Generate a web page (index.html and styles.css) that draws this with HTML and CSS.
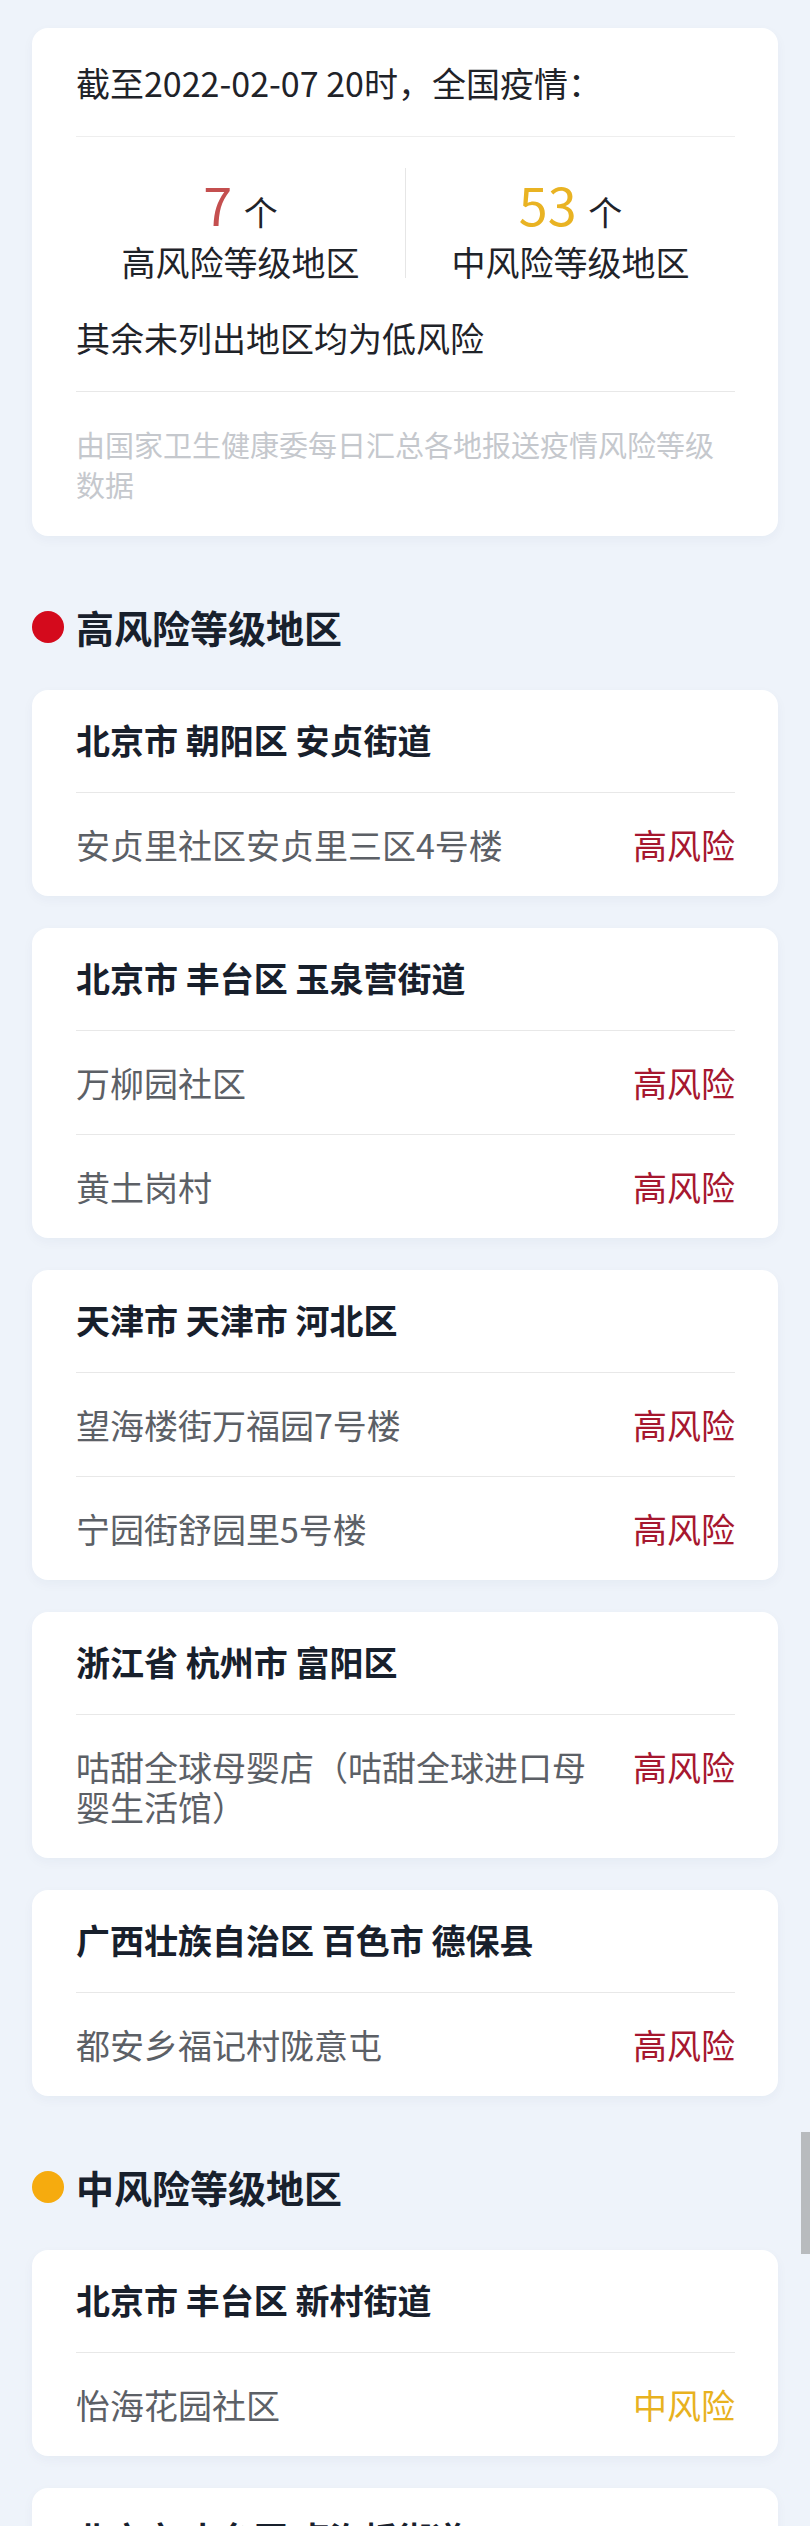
FILE: index.html
```html
<!DOCTYPE html>
<html lang="zh-CN">
<head>
  <meta charset="UTF-8">
  <title>全国疫情风险等级地区</title>
  <link rel="stylesheet" href="styles.css">
</head>
<body>

  <div class="page">
    <!-- 汇总 -->
    <div class="card summary">
      <div class="summary-head">截至2022-02-07 20时，全国疫情：</div>
      <div class="stats">
        <div class="stat">
          <div class="stat-num num-high">7 <span class="unit">个</span></div>
          <div class="stat-label">高风险等级地区</div>
        </div>
        <div class="stats-sep"></div>
        <div class="stat">
          <div class="stat-num num-mid">53 <span class="unit">个</span></div>
          <div class="stat-label">中风险等级地区</div>
        </div>
      </div>
      <p class="summary-note">其余未列出地区均为低风险</p>
      <p class="summary-source">由国家卫生健康委每日汇总各地报送疫情风险等级数据</p>
    </div>

    <!-- 高风险 -->
    <h2 class="section-title"><span class="dot dot-high"></span>高风险等级地区</h2>
    <div class="area-list">
      <div class="card area">
        <div class="area-title">北京市 朝阳区 安贞街道</div>
        <div class="area-row">
          <span class="area-name">安贞里社区安贞里三区4号楼</span>
          <span class="risk risk-high">高风险</span>
        </div>
      </div>

      <div class="card area">
        <div class="area-title">北京市 丰台区 玉泉营街道</div>
        <div class="area-row">
          <span class="area-name">万柳园社区</span>
          <span class="risk risk-high">高风险</span>
        </div>
        <div class="area-row">
          <span class="area-name">黄土岗村</span>
          <span class="risk risk-high">高风险</span>
        </div>
      </div>

      <div class="card area">
        <div class="area-title">天津市 天津市 河北区</div>
        <div class="area-row">
          <span class="area-name">望海楼街万福园7号楼</span>
          <span class="risk risk-high">高风险</span>
        </div>
        <div class="area-row">
          <span class="area-name">宁园街舒园里5号楼</span>
          <span class="risk risk-high">高风险</span>
        </div>
      </div>

      <div class="card area">
        <div class="area-title">浙江省 杭州市 富阳区</div>
        <div class="area-row">
          <span class="area-name">咕甜全球母婴店（咕甜全球进口母婴生活馆）</span>
          <span class="risk risk-high">高风险</span>
        </div>
      </div>

      <div class="card area">
        <div class="area-title">广西壮族自治区 百色市 德保县</div>
        <div class="area-row">
          <span class="area-name">都安乡福记村陇意屯</span>
          <span class="risk risk-high">高风险</span>
        </div>
      </div>
    </div>

    <!-- 中风险 -->
    <h2 class="section-title"><span class="dot dot-mid"></span>中风险等级地区</h2>
    <div class="area-list">
      <div class="card area">
        <div class="area-title">北京市 丰台区 新村街道</div>
        <div class="area-row">
          <span class="area-name">怡海花园社区</span>
          <span class="risk risk-mid">中风险</span>
        </div>
      </div>

      <div class="card area">
        <div class="area-title">北京市 丰台区 卢沟桥街道</div>
        <div class="area-row">
          <span class="area-name">靛厂村</span>
          <span class="risk risk-mid">中风险</span>
        </div>
      </div>
    </div>
  </div>

  <div class="scroll-thumb"></div>

</body>
</html>
```

FILE: styles.css
```css
html {
  overflow: hidden;
}

body {
  margin: 0;
  font-family: "Noto Sans CJK SC", "Noto Sans", sans-serif;
  background: #eef3fa;
  color: #1f2329;
  position: relative;
}

.page {
  padding: 28px 32px;
}

.card {
  background: white;
  border-radius: 16px;
  box-shadow: 0 4px 12px rgba(30, 50, 90, 0.04);
  padding: 0 43px 0 44px;
}

/* summary card */
.summary-head {
  font-size: 34px;
  line-height: 40px;
  padding: 35px 0 33px;
  border-bottom: 1px solid #eeeeee;
}

.stats {
  display: flex;
  margin-top: 31px;
}

.stat {
  flex: 1;
  text-align: center;
}

.stats-sep {
  width: 1px;
  height: 110px;
  background: #e6e6e6;
}

.stat-num {
  font-size: 52px;
  line-height: 72px;
}

.unit {
  font-size: 34px;
  line-height: 1;
  color: #1f2329;
}

.num-high {
  color: #c44f4f;
}

.num-mid {
  color: #e9b323;
}

.stat-label {
  font-size: 34px;
  line-height: 44px;
}

.summary-note {
  margin: 34px 0 0;
  font-size: 34px;
  line-height: 40px;
  padding-bottom: 33px;
  border-bottom: 1px solid #e8e8e8;
}

.summary-source {
  margin: 32px 0 0;
  padding-bottom: 32px;
  font-size: 29px;
  line-height: 40px;
  color: #c5c8cd;
}

/* sections */
.section-title {
  display: flex;
  align-items: center;
  margin: 66px 0 38px;
  font-size: 38px;
  line-height: 50px;
  font-weight: bold;
  color: #18202c;
}

.dot {
  width: 32px;
  height: 32px;
  border-radius: 50%;
  margin-right: 12px;
}

.dot-high {
  background: #d40a1c;
}

.dot-mid {
  background: #f6ab0e;
}

.area-list {
  display: flex;
  flex-direction: column;
  gap: 32px;
}

.area-title {
  font-size: 34px;
  line-height: 40px;
  font-weight: bold;
  color: #18202c;
  padding: 30px 0 32px;
  border-bottom: 1px solid #e8e8e8;
}

.area-row {
  display: flex;
  align-items: flex-start;
  gap: 40px;
  padding: 32px 0 31px;
  font-size: 34px;
  line-height: 40px;
}

.area-row + .area-row {
  border-top: 1px solid #e8e8e8;
}

.area-name {
  flex: 1;
  color: #5c6066;
}

.risk {
  flex-shrink: 0;
}

.risk-high {
  color: #a6172f;
}

.risk-mid {
  color: #e8b21f;
}

.scroll-thumb {
  position: absolute;
  top: 2132px;
  right: 0;
  width: 9px;
  height: 122px;
  background: #b8bbbe;
}
```
